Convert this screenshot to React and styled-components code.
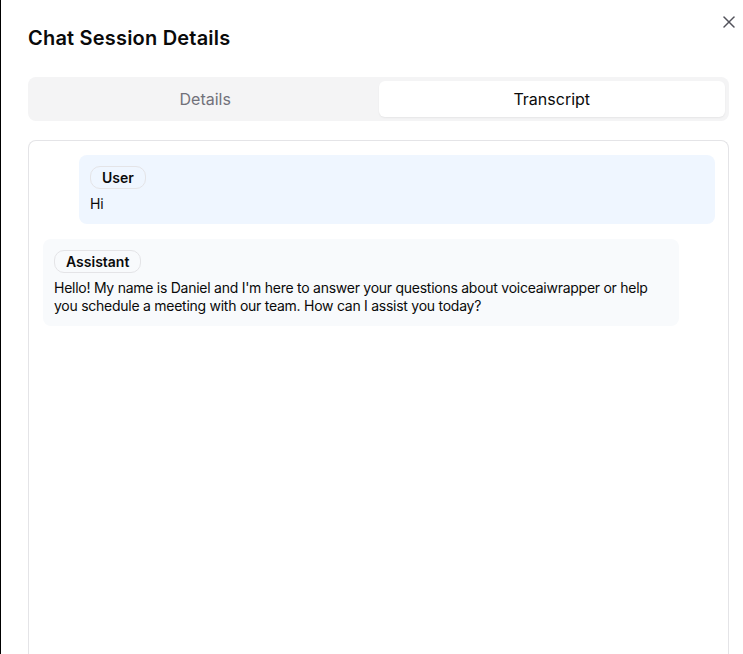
import React from 'react'
import styled, { createGlobalStyle } from 'styled-components'

const GlobalStyle = createGlobalStyle`
  * { box-sizing: border-box; }
  html, body {
    margin: 0;
    padding: 0;
    background: #ffffff;
    font-family: 'Inter', 'Liberation Sans', sans-serif;
    color: #0a0a0a;
    overflow: hidden;
  }
`;

const messages = [
  { role: 'User', text: 'Hi', user: true },
  {
    role: 'Assistant',
    text: "Hello! My name is Daniel and I'm here to answer your questions about voiceaiwrapper or help you schedule a meeting with our team. How can I assist you today?",
    user: false,
  },
];

export default function App() {
  return (
    <>
      <GlobalStyle />
      <Dialog>
        <CloseButton aria-label="Close">
          <svg width="20" height="20" viewBox="0 0 24 24" fill="none" stroke="#52525b" strokeWidth="1.8" strokeLinecap="round">
            <path d="M18 6 6 18" />
            <path d="m6 6 12 12" />
          </svg>
        </CloseButton>
        <Title>Chat Session Details</Title>
        <Tabs>
          <Tab>Details</Tab>
          <Tab $active>Transcript</Tab>
        </Tabs>
        <Transcript>
          {messages.map((m, i) => (
            <Bubble key={i} $user={m.user}>
              <RoleBadge>{m.role}</RoleBadge>
              <MessageText>{m.text}</MessageText>
            </Bubble>
          ))}
        </Transcript>
      </Dialog>
    </>
  )
}

const Dialog = styled.div`
  position: relative;
  height: 654px;
  border-left: 1px solid #000;
  padding: 24px 14px 0 27px;
  display: flex;
  flex-direction: column;
`;

const CloseButton = styled.button`
  position: absolute;
  top: 12px;
  right: 4px;
  width: 20px;
  height: 20px;
  padding: 0;
  border: none;
  background: transparent;
  display: flex;
  align-items: center;
  justify-content: center;
  cursor: pointer;
`;

const Title = styled.h2`
  margin: 0;
  font-size: 20px;
  line-height: 28px;
  font-weight: 600;
  letter-spacing: 0.2px;
`;

const Tabs = styled.div`
  margin-top: 25px;
  height: 44px;
  padding: 4px;
  background: #f4f4f5;
  border-radius: 8px;
  display: grid;
  grid-template-columns: 1fr 1fr;
`;

const Tab = styled.div`
  display: flex;
  align-items: center;
  justify-content: center;
  border-radius: 6px;
  font-size: 16px;
  font-weight: 400;
  color: ${p => (p.$active ? '#0a0a0a' : '#71717a')};
  background: ${p => (p.$active ? '#ffffff' : 'transparent')};
  box-shadow: ${p => (p.$active ? '0 1px 2px rgba(0,0,0,0.06)' : 'none')};
`;

const Transcript = styled.div`
  margin-top: 19px;
  flex: 1;
  border: 1px solid #e4e4e7;
  border-bottom: none;
  border-radius: 8px 8px 0 0;
  padding: 14px 13px 14px 14px;
  display: flex;
  flex-direction: column;
  gap: 15px;
`;

const Bubble = styled.div`
  width: 636px;
  max-width: 95%;
  align-self: ${p => (p.$user ? 'flex-end' : 'flex-start')};
  background: ${p => (p.$user ? '#eff6ff' : '#f8fafc')};
  border-radius: 8px;
  padding: 11px;
  display: flex;
  flex-direction: column;
  align-items: flex-start;
  gap: 6px;
`;

const RoleBadge = styled.span`
  display: inline-flex;
  align-items: center;
  height: 23px;
  padding: 0 11px;
  border: 1px solid #e4e4e7;
  border-radius: 10px;
  font-size: 14px;
  font-weight: 600;
  color: #0a0a0a;
`;

const MessageText = styled.p`
  margin: 0;
  font-size: 14px;
  line-height: 18px;
  letter-spacing: -0.26px;
  color: #0a0a0a;
`;
